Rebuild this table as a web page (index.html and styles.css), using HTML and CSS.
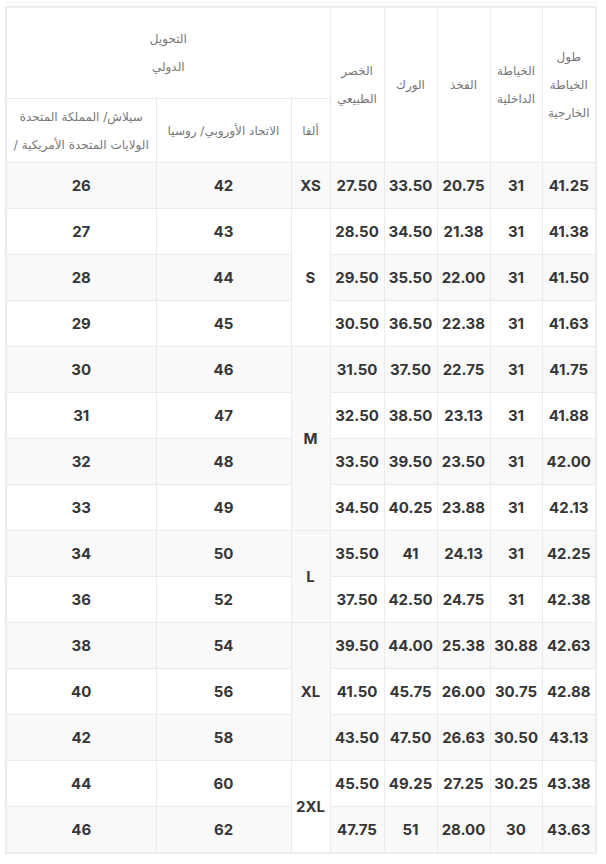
FILE: index.html
```html
<!DOCTYPE html>
<html lang="ar">
<head>
<meta charset="utf-8">
<title>جدول المقاسات</title>
<link rel="stylesheet" href="styles.css">
</head>
<body>
<div class="wrap">
<table class="size-table">
  <colgroup>
    <col class="c-a"><col class="c-b"><col class="c-c"><col class="c-d"><col class="c-e"><col class="c-f"><col class="c-g"><col class="c-h">
  </colgroup>
  <thead>
    <tr class="h1">
      <th colspan="3">التحويل<br>الدولي</th>
      <th rowspan="2">الخصر الطبيعي</th>
      <th rowspan="2">الورك</th>
      <th rowspan="2">الفخذ</th>
      <th rowspan="2">الخياطة الداخلية</th>
      <th rowspan="2">طول الخياطة الخارجية</th>
    </tr>
    <tr class="h2">
      <th>سيلاش/ المملكة المتحدة<br><span class="ltr-line">/ الولايات المتحدة الأمريكية</span></th>
      <th>الاتحاد الأوروبي/ روسيا</th>
      <th>ألفا</th>
    </tr>
  </thead>
  <tbody>
    <tr><td>26</td><td>42</td><td>XS</td><td>27.50</td><td>33.50</td><td>20.75</td><td>31</td><td>41.25</td></tr>
    <tr><td>27</td><td>43</td><td rowspan="3">S</td><td>28.50</td><td>34.50</td><td>21.38</td><td>31</td><td>41.38</td></tr>
    <tr><td>28</td><td>44</td><td>29.50</td><td>35.50</td><td>22.00</td><td>31</td><td>41.50</td></tr>
    <tr><td>29</td><td>45</td><td>30.50</td><td>36.50</td><td>22.38</td><td>31</td><td>41.63</td></tr>
    <tr><td>30</td><td>46</td><td rowspan="4">M</td><td>31.50</td><td>37.50</td><td>22.75</td><td>31</td><td>41.75</td></tr>
    <tr><td>31</td><td>47</td><td>32.50</td><td>38.50</td><td>23.13</td><td>31</td><td>41.88</td></tr>
    <tr><td>32</td><td>48</td><td>33.50</td><td>39.50</td><td>23.50</td><td>31</td><td>42.00</td></tr>
    <tr><td>33</td><td>49</td><td>34.50</td><td>40.25</td><td>23.88</td><td>31</td><td>42.13</td></tr>
    <tr><td>34</td><td>50</td><td rowspan="2">L</td><td>35.50</td><td>41</td><td>24.13</td><td>31</td><td>42.25</td></tr>
    <tr><td>36</td><td>52</td><td>37.50</td><td>42.50</td><td>24.75</td><td>31</td><td>42.38</td></tr>
    <tr><td>38</td><td>54</td><td rowspan="3">XL</td><td>39.50</td><td>44.00</td><td>25.38</td><td>30.88</td><td>42.63</td></tr>
    <tr><td>40</td><td>56</td><td>41.50</td><td>45.75</td><td>26.00</td><td>30.75</td><td>42.88</td></tr>
    <tr><td>42</td><td>58</td><td>43.50</td><td>47.50</td><td>26.63</td><td>30.50</td><td>43.13</td></tr>
    <tr><td>44</td><td>60</td><td rowspan="2">2XL</td><td>45.50</td><td>49.25</td><td>27.25</td><td>30.25</td><td>43.38</td></tr>
    <tr><td>46</td><td>62</td><td>47.75</td><td>51</td><td>28.00</td><td>30</td><td>43.63</td></tr>
  </tbody>
</table>
</div>
</body>
</html>
```

FILE: styles.css
```css
html, body {
  margin: 0;
  padding: 0;
  background: #ffffff;
}

.wrap {
  margin: 2px 9px 0 5px;
  padding-top: 3px;
  border-top: 1px solid #f3f3f3;
}

.size-table {
  width: 592px;
  table-layout: fixed;
  border-collapse: collapse;
  border: 2px solid #ececec;
}

.c-a { width: 150px; }
.c-b { width: 135px; }
.c-c { width: 39px; }
.c-d { width: 54px; }
.c-e { width: 53px; }
.c-f { width: 53px; }
.c-g { width: 52px; }
.c-h { width: 54px; }

.size-table th,
.size-table td {
  border: 1px solid #ebebeb;
  text-align: center;
  vertical-align: middle;
  padding: 0 2px;
}

.size-table th {
  font-family: "DejaVu Sans", sans-serif;
  font-weight: normal;
  font-size: 12px;
  line-height: 28px;
  color: #777777;
  background: #ffffff;
}

.ltr-line {
  direction: ltr;
  unicode-bidi: isolate;
}

.h1 th { height: 90px; }
.h2 th { height: 63px; }

.size-table td {
  font-family: "Inter", "Lato", sans-serif;
  font-weight: 700;
  font-size: 15px;
  color: #363636;
  height: 45px;
  background: #ffffff;
}

.size-table tbody tr:nth-child(odd) td {
  background: #f9f9f9;
}
```
